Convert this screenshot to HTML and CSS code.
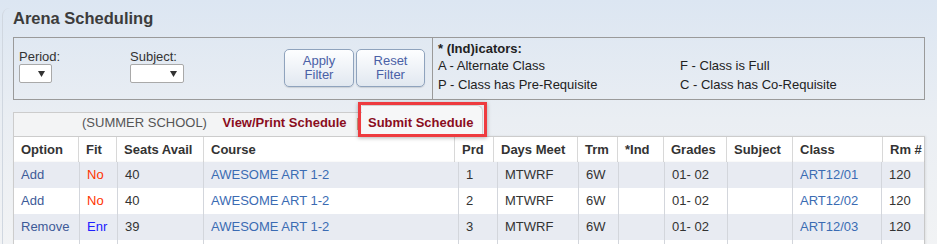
FILE: index.html
```html
<!DOCTYPE html>
<html lang="en">
<head>
    <meta charset="UTF-8">
    <title>Arena Scheduling</title>
    <link rel="stylesheet" href="styles.css">
</head>
<body>
    <!-- Painel principal -->
    <div class="panel">
        <h1 class="title">Arena Scheduling</h1>

        <!-- Filtros e legenda de indicadores -->
        <div class="filter">
            <div class="filter-left">
                <div class="field field-period">
                    <label>Period:</label>
                    <div class="select select-period">
                        <svg class="caret" width="7" height="6" viewBox="0 0 7 6"><path d="M0 0H7L3.5 6Z"/></svg>
                    </div>
                </div>
                <div class="field field-subject">
                    <label>Subject:</label>
                    <div class="select select-subject">
                        <svg class="caret" width="7" height="6" viewBox="0 0 7 6"><path d="M0 0H7L3.5 6Z"/></svg>
                    </div>
                </div>
                <button class="btn btn-apply">Apply<br>Filter</button>
                <button class="btn btn-reset">Reset<br>Filter</button>
            </div>
            <div class="indicators">
                <div class="ind-title">* (Ind)icators:</div>
                <div class="ind-grid">
                    <span>A - Alternate Class</span>
                    <span>F - Class is Full</span>
                    <span>P - Class has Pre-Requisite</span>
                    <span>C - Class has Co-Requisite</span>
                </div>
            </div>
        </div>

        <!-- Abas -->
        <div class="tabs">
            <div class="tab-main">
                <span class="term">(SUMMER SCHOOL)</span>
                <a class="tab-link">View/Print Schedule</a>
                <span class="sep">|</span>
            </div>
            <div class="tab-submit">
                <a class="tab-link">Submit Schedule</a>
                <div class="highlight"></div>
            </div>
        </div>

        <!-- Cabeçalho da grade -->
        <table class="grid grid-head">
            <colgroup>
                <col class="h1"><col class="h2"><col class="h3"><col class="h4"><col class="h5"><col class="h6">
                <col class="h7"><col class="h8"><col class="h9"><col class="h10"><col class="h11"><col class="h12">
            </colgroup>
            <tr>
                <th>Option</th><th>Fit</th><th>Seats Avail</th><th>Course</th><th>Prd</th><th>Days Meet</th>
                <th>Trm</th><th>*Ind</th><th>Grades</th><th>Subject</th><th>Class</th><th>Rm #</th>
            </tr>
        </table>

        <!-- Linhas de cursos -->
        <table class="grid grid-body">
            <colgroup>
                <col class="b1"><col class="b2"><col class="b3"><col class="b4"><col class="b5"><col class="b6">
                <col class="b7"><col class="b8"><col class="b9"><col class="b10"><col class="b11"><col class="b12">
            </colgroup>
            <tr class="alt">
                <td class="opt">Add</td><td class="fit-no">No</td><td>40</td><td class="link">AWESOME ART 1-2</td>
                <td>1</td><td>MTWRF</td><td>6W</td><td></td><td>01- 02</td><td></td><td class="link">ART12/01</td><td>120</td>
            </tr>
            <tr>
                <td class="opt">Add</td><td class="fit-no">No</td><td>40</td><td class="link">AWESOME ART 1-2</td>
                <td>2</td><td>MTWRF</td><td>6W</td><td></td><td>01- 02</td><td></td><td class="link">ART12/02</td><td>120</td>
            </tr>
            <tr class="alt">
                <td class="opt">Remove</td><td class="fit-enr">Enr</td><td>39</td><td class="link">AWESOME ART 1-2</td>
                <td>3</td><td>MTWRF</td><td>6W</td><td></td><td>01- 02</td><td></td><td class="link">ART12/03</td><td>120</td>
            </tr>
            <tr class="empty">
                <td></td><td></td><td></td><td></td><td></td><td></td>
                <td></td><td></td><td></td><td></td><td></td><td></td>
            </tr>
        </table>
    </div>
</body>
</html>
```

FILE: styles.css
```css
/* Reset básico */
* {
    margin: 0;
    padding: 0;
    box-sizing: border-box;
}

/* Fundo com gradiente azul claro */
body {
    font-family: "Liberation Sans", Arial, sans-serif;
    font-size: 13px;
    color: #333333;
    background: linear-gradient(180deg, #dce6f2 0%, #eaeef3 45%, #f3f4f5 100%);
    min-height: 244px;
    overflow: hidden;
}

/* Painel com borda esquerda suave */
.panel {
    margin: 18px 0 0 2px;
    padding: 0 10px 0 10px;
    border-left: 1px solid #d0d7e0;
    border-top-left-radius: 8px;
}

.title {
    margin-top: -10px;
    font-size: 16.5px;
    line-height: 20px;
    font-weight: bold;
    color: #3c3c3c;
}

/* Caixa de filtros */
.filter {
    display: flex;
    width: 912px;
    height: 63px;
    margin-top: 9px;
    border: 1px solid #9a9a9a;
}

.filter-left {
    display: flex;
    align-items: flex-start;
    width: 418px;
    padding: 11px 0 0 5px;
}

.field {
    margin-top: 1px;
}

.field label {
    display: block;
    line-height: 14px;
    color: #333333;
}

.field-period {
    width: 111px;
}

.field-subject {
    width: 154px;
}

/* Select desenhado (caixa branca com seta) */
.select {
    display: flex;
    align-items: center;
    justify-content: flex-end;
    height: 19px;
    padding-right: 6px;
    background: #ffffff;
    border: 1px solid #a9a9a9;
    border-radius: 2px;
}

.select-period {
    width: 33px;
}

.select-subject {
    width: 54px;
}

.caret {
    fill: #333333;
}

/* Botões Apply / Reset */
.btn {
    height: 38px;
    padding-bottom: 1px;
    font-family: inherit;
    font-size: 13px;
    line-height: 14px;
    color: #4a60a6;
    background: linear-gradient(180deg, #fdfeff 0%, #eef2f7 55%, #e1e8f0 100%);
    border: 1px solid #8fa3bd;
    border-radius: 5px;
    box-shadow: 0 1px 1px rgba(0, 0, 0, 0.12);
}

.btn-apply {
    width: 70px;
}

.btn-reset {
    width: 69px;
    margin-left: 2px;
}

/* Legenda de indicadores */
.indicators {
    flex: 1;
    padding: 3px 0 0 5px;
    border-left: 1px solid #9a9a9a;
    color: #222222;
}

.ind-title {
    font-weight: bold;
    line-height: 15px;
}

.ind-grid {
    display: grid;
    grid-template-columns: 242px auto;
    grid-auto-rows: 19px;
    line-height: 19px;
}

/* Abas */
.tabs {
    display: flex;
    align-items: flex-end;
    height: 31px;
    margin-top: 5px;
}

.tab-main {
    width: 349px;
    height: 24px;
    padding: 2px 0 0 68px;
    line-height: 15px;
    background: #f3f4f5;
    border-top: 1px solid #cccccc;
    border-left: 1px solid #cccccc;
}

.term {
    color: #555555;
}

.tab-link {
    font-weight: bold;
    color: #8a0d1d; /* Vermelho escuro */
}

.tab-main .tab-link {
    margin-left: 12px;
}

.sep {
    margin-left: 6px;
    color: #777777;
}

.tab-submit {
    position: relative;
    width: 121px;
    height: 31px;
    padding: 9px 0 0 6px;
    line-height: 15px;
    background: #f6f7f8;
    border-top: 1px solid #d2d2d2;
    border-right: 1px solid #d2d2d2;
    border-top-right-radius: 6px;
}

/* Destaque vermelho em volta da aba */
.highlight {
    position: absolute;
    left: -4px;
    top: -4px;
    width: 129px;
    height: 35px;
    border: 3px solid #ee3b3f;
    box-shadow: 0 1px 4px rgba(0, 0, 0, 0.3);
}

/* Grade de cursos */
.grid {
    width: 912px;
    table-layout: fixed;
    border-collapse: separate;
    border-spacing: 0;
    border-right: 1px solid #c8c8c8;
    box-shadow: 1px 0 2px rgba(0, 0, 0, 0.08);
}

.grid th,
.grid td {
    padding: 0 7px;
    text-align: left;
    white-space: nowrap;
    overflow: hidden;
}

.grid-head {
    background: #ffffff;
    border-top: 1px solid #cccccc;
}

.grid-head th {
    line-height: 25px;
    font-weight: bold;
    color: #333333;
    border-left: 1px solid #d8d8d8;
}

.grid-head th:first-child {
    border-left-color: #cccccc;
}

.grid-body tr {
    background: #ffffff;
}

.grid-body tr.alt {
    background: #e8ebf2;
}

.grid-body td {
    height: 26px;
    line-height: 26px;
    color: #333333;
    border-left: 1px solid #d3d6dc;
}

.grid-body td:first-child {
    border-left-color: #cccccc;
}

.grid-body .opt {
    color: #3d5a98;
}

.grid-body .fit-no {
    color: #ff3300;
}

.grid-body .fit-enr {
    color: #2020ff;
}

.grid-body .link {
    color: #3b6bb3;
}

/* Larguras das colunas do cabeçalho */
.h1 { width: 65px; }
.h2 { width: 38px; }
.h3 { width: 87px; }
.h4 { width: 251px; }
.h5 { width: 39px; }
.h6 { width: 84px; }
.h7 { width: 40px; }
.h8 { width: 46px; }
.h9 { width: 63px; }
.h10 { width: 66px; }
.h11 { width: 90px; }
.h12 { width: 42px; }

/* Larguras das colunas do corpo */
.b1 { width: 66px; }
.b2 { width: 38px; }
.b3 { width: 86px; }
.b4 { width: 255px; }
.b5 { width: 39px; }
.b6 { width: 81px; }
.b7 { width: 40px; }
.b8 { width: 46px; }
.b9 { width: 63px; }
.b10 { width: 65px; }
.b11 { width: 89px; }
.b12 { width: 43px; }
```
